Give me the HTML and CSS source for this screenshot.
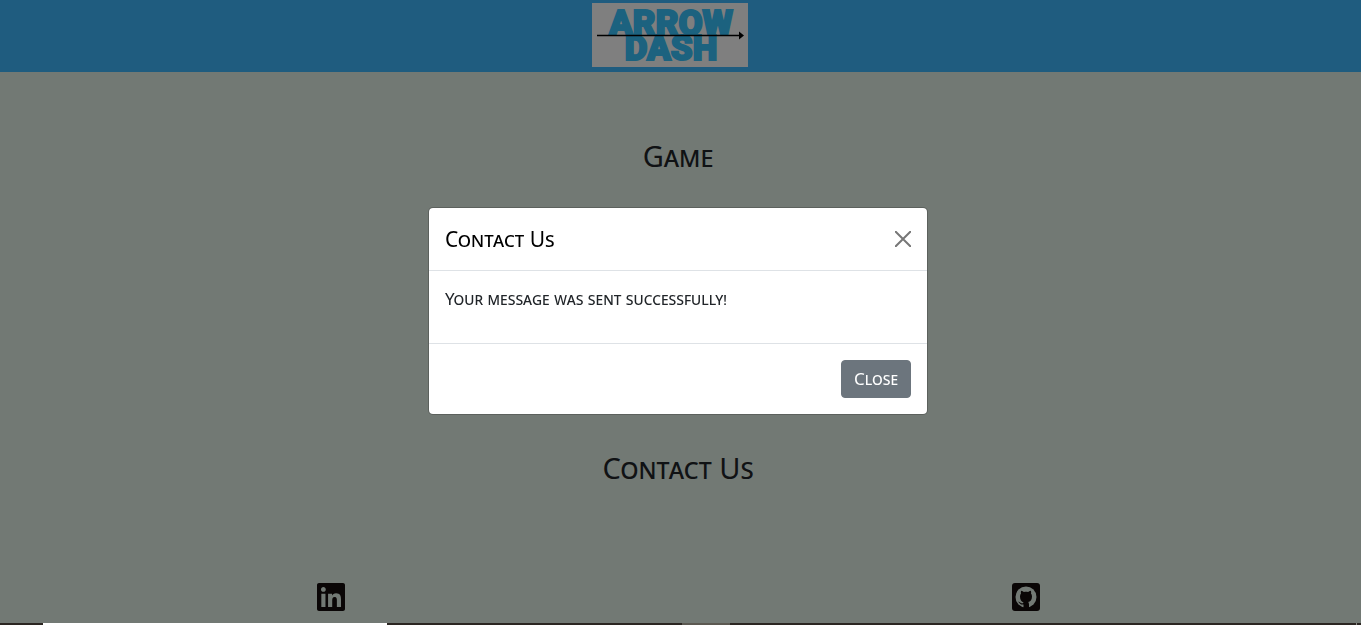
FILE: index.html
```html
<!DOCTYPE html>
<html lang="en">
<head>
<meta charset="utf-8">
<meta name="viewport" content="width=device-width, initial-scale=1">
<title>Arrow Dash</title>
<link rel="stylesheet" href="styles.css">
</head>
<body>
<div class="page">
  <header class="site-header">
    <svg class="logo" viewBox="0 0 156 64" role="img" aria-label="Arrow Dash">
      <rect class="logo-bg" width="156" height="64"/>
      <text class="logo-text" text-anchor="middle"><tspan x="79" y="32">ARROW</tspan><tspan x="79" y="57">DASH</tspan></text>
      <path d="M5 32.5H148" stroke="#000" stroke-width="1.500"/>
      <path d="M147 28.5L152 32.5L147 36.5Z"/>
    </svg>
  </header>
  <main class="content">
    <h2 class="section-title">Game</h2>
    <h2 class="section-title">Contact Us</h2>
  </main>
  <footer class="social">
    <a class="social-link" href="#linkedin" aria-label="LinkedIn">
      <svg class="social-icon" viewBox="0 32 448 448"><path d="M416 32H31.900C14.300 32 0 46.500 0 64.300v383.400C0 465.500 14.300 480 31.900 480H416c17.600 0 32-14.500 32-32.300V64.300c0-17.800-14.400-32.300-32-32.300zM135.400 416H69V202.200h66.500V416zm-33.200-243c-21.300 0-38.500-17.300-38.500-38.500S80.900 96 102.200 96c21.200 0 38.500 17.300 38.500 38.500 0 21.300-17.200 38.500-38.500 38.500zm282.100 243h-66.400V312c0-24.800-.5-56.700-34.500-56.700-34.600 0-39.900 27-39.900 54.900V416h-66.400V202.200h63.700v29.200h.9c8.900-16.800 30.600-34.500 62.900-34.500 67.200 0 79.700 44.300 79.700 101.900V416z"/></svg>
    </a>
    <a class="social-link" href="#github" aria-label="GitHub">
      <svg class="social-icon" viewBox="0 0 28 28"><rect width="28" height="28" rx="3"/><circle class="github-disc" cx="14" cy="14" r="10.500"/><path d="M11.500 25V21.500C8.500 22 8 20.500 7 19.500L6 18.800C7.500 18.300 8.500 20 9.500 20.300C10.500 20.600 11.200 20.200 11.600 19.300C9.500 18.700 8 17 8 13.500C8 12.200 8.400 11.200 9 10.500C8.700 9.500 8.800 8.500 9.200 7.700C10.300 7.700 11.300 8.500 12 9C13.300 8.700 14.700 8.700 16 9C16.700 8.500 17.700 7.700 18.800 7.700C19.200 8.500 19.300 9.500 19 10.500C19.600 11.200 20 12.200 20 13.500C20 17 18.300 18.700 16.200 19.100C16.700 19.700 17 20.500 17 21.500V25Z"/></svg>
    </a>
  </footer>
  <div class="taskbar"><span class="task-active"></span><span class="task-hover"></span><span class="task-edge"></span></div>
</div>
<div class="backdrop">
  <section class="modal" role="dialog" aria-modal="true" aria-labelledby="modal-title">
    <div class="modal-header">
      <h5 class="modal-title" id="modal-title">Contact Us</h5>
      <button class="modal-dismiss" type="button" aria-label="Dismiss">
        <svg class="dismiss-icon" viewBox="0 0 16 16"><path d="M.7.7L15.300 15.300M15.300.7L.7 15.300"/></svg>
      </button>
    </div>
    <div class="modal-body"><p class="message">Your message was sent successfully!</p></div>
    <div class="modal-footer"><button class="button" type="button">Close</button></div>
  </section>
</div>
</body>
</html>
```
FILE: styles.css
```css
* { box-sizing: border-box; }
body {
  margin: 0;
  background: #e5f2e8;
  color: #212529;
  font: 400 17px/24px "Noto Sans", "Open Sans", sans-serif;
  font-variant: small-caps;
}
.page {
  min-height: 100vh;
  display: flex;
  flex-direction: column;
}
.site-header {
  display: flex;
  justify-content: center;
  padding: 3px 21px 5px 0;
  background: #3eb9fe;
}
.logo { width: 156px; height: 64px; overflow: visible; }
.logo-bg { fill: #fff; }
.logo-text {
  font: 900 35px Roboto, sans-serif;
  fill: #38c4ff;
  stroke: #38c4ff;
  stroke-width: 2px;
}
.content {
  flex: 1;
  display: flex;
  flex-direction: column;
  gap: 276px;
  padding: 66px 5px 0 0;
  text-align: center;
}
.section-title {
  margin: 0;
  font-size: 29px;
  line-height: 36px;
  font-weight: 400;
}
.social {
  display: grid;
  grid-template-columns: 1fr 1fr;
  gap: 34px;
  padding: 0 5px 12px 0;
}
.social-link {
  display: flex;
  justify-self: center;
  color: #140c0c;
}
.social-icon { width: 28px; height: 28px; fill: currentColor; }
.social-icon .github-disc { fill: #e5f2e8; }
.taskbar {
  position: relative;
  z-index: 3;
  display: grid;
  grid-template-columns: 43px 344px 295px 48px 1fr 1px 4px;
  height: 2px;
  background: #2b2622;
}
.task-active { grid-column: 2; background: #fff; }
.task-hover { grid-column: 4; background: #5c5952; }
.task-edge { grid-column: 6; background: #8a8a84; }
.backdrop {
  position: fixed;
  inset: 0;
  z-index: 2;
  display: flex;
  align-items: center;
  justify-content: center;
  padding: 0 5px 3px 0;
  background: rgba(0, 0, 0, .5);
}
.modal {
  width: 100%;
  max-width: 500px;
  background: #fff;
  background-clip: padding-box;
  border: 1px solid rgba(0, 0, 0, .2);
  border-radius: 5px;
}
.modal-header {
  display: flex;
  align-items: center;
  justify-content: space-between;
  padding: 16px;
  border-bottom: 1px solid #dee2e6;
}
.modal-title {
  margin: 0;
  font-size: 21px;
  line-height: 30px;
  font-weight: 400;
  color: #000;
}
.modal-dismiss {
  display: flex;
  padding: 0;
  border: 0;
  background: none;
}
.dismiss-icon {
  width: 16px;
  height: 16px;
  fill: none;
  stroke: #777;
  stroke-width: 2;
  stroke-linecap: round;
}
.modal-body { padding: 16px; }
.message { margin: 0 0 16px; }
.modal-footer {
  display: flex;
  justify-content: flex-end;
  padding: 16px;
  border-top: 1px solid #dee2e6;
}
.button {
  padding: 6px 12px;
  border: 1px solid #6c757d;
  border-radius: 4px;
  background: #6c757d;
  color: #fff;
  font: inherit;
  font-variant: small-caps;
}
```
